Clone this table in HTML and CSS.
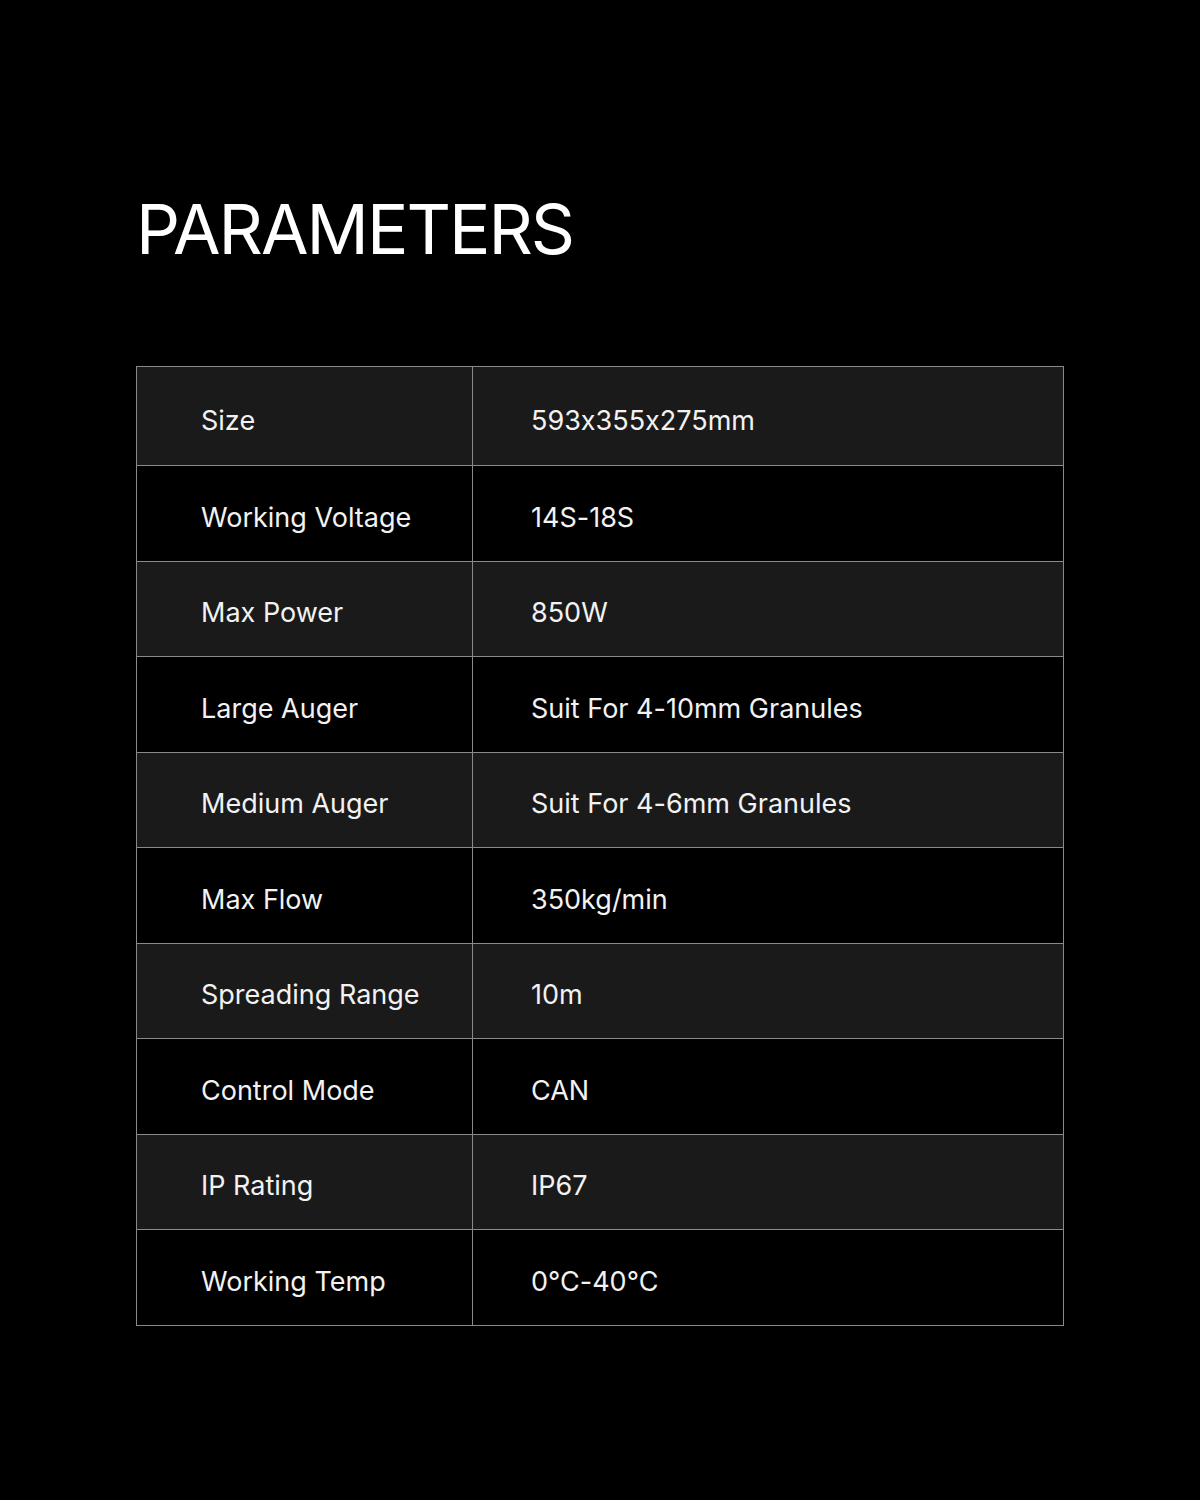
FILE: index.html
```html
<!DOCTYPE html>
<html>
<head>
<meta charset="utf-8">
<link rel="stylesheet" href="styles.css">
</head>
<body>
<main class="page">
  <h1 class="title">PARAMETERS</h1>
  <table class="params">
    <tbody>
      <tr class="first"><td class="label">Size</td><td class="value">593x355x275mm</td></tr>
      <tr><td class="label">Working Voltage</td><td class="value">14S-18S</td></tr>
      <tr><td class="label">Max Power</td><td class="value">850W</td></tr>
      <tr><td class="label">Large Auger</td><td class="value">Suit For 4-10mm Granules</td></tr>
      <tr><td class="label">Medium Auger</td><td class="value">Suit For 4-6mm Granules</td></tr>
      <tr><td class="label">Max Flow</td><td class="value">350kg/min</td></tr>
      <tr><td class="label">Spreading Range</td><td class="value">10m</td></tr>
      <tr><td class="label">Control Mode</td><td class="value">CAN</td></tr>
      <tr><td class="label">IP Rating</td><td class="value">IP67</td></tr>
      <tr><td class="label">Working Temp</td><td class="value">0℃-40℃</td></tr>
    </tbody>
  </table>
</main>
</body>
</html>
```

FILE: styles.css
```css
html, body {
  margin: 0;
  padding: 0;
  background: #000;
}
body {
  width: 1200px;
  height: 1500px;
  color: #fff;
  font-family: Inter, "Noto Sans", sans-serif;
  font-feature-settings: "calt" 0;
}
.page {
  padding: 184px 136px 0 136px;
}
.title {
  margin: 0;
  font-size: 69px;
  font-weight: 400;
  line-height: 90px;
  letter-spacing: -2px;
}
.params {
  margin-top: 92px;
  width: 928px;
  border-collapse: collapse;
  border: 1px solid #8a8a8a;
}
.params tr {
  height: 95.5px;
}
.params tr.first {
  height: 99px;
}
.params tr:nth-child(odd) {
  background: #1a1a1a;
}
.params td {
  border: 1px solid #8a8a8a;
  padding: 8px 0 0 0;
  font-size: 27px;
  font-weight: 400;
  color: #f2f2f2;
  vertical-align: middle;
}
.params .label {
  width: 271px;
  padding-left: 64px;
}
.params .value {
  padding-left: 58px;
}
```
